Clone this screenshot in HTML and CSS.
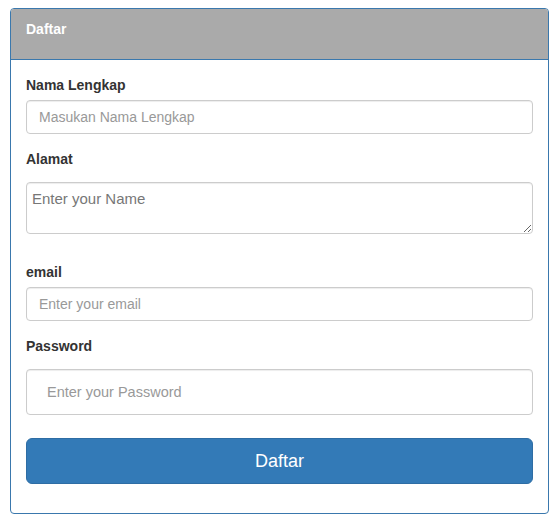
FILE: index.html
```html
<!DOCTYPE html>
<html lang="en">
<head>
    <meta charset="UTF-8">
    <meta name="viewport" content="width=device-width, initial-scale=1.0">
    <title>Daftar</title>
    <link rel="stylesheet" href="styles.css">
</head>
<body>
    <div class="panel">
        <div class="panel-heading">Daftar</div>
        <form class="panel-body">
            <div class="form-group">
                <label for="nama">Nama Lengkap</label>
                <input type="text" id="nama" class="form-control" placeholder="Masukan Nama Lengkap">
            </div>
            <div class="form-group">
                <label for="alamat">Alamat</label>
                <textarea id="alamat" class="form-control spaced" placeholder="Enter your Name"></textarea>
            </div>
            <div class="form-group">
                <label for="email">email</label>
                <input type="email" id="email" class="form-control" placeholder="Enter your email">
            </div>
            <div class="form-group">
                <label for="password">Password</label>
                <input type="password" id="password" class="form-control input-lg spaced" placeholder="Enter your Password">
            </div>
            <button type="button" class="btn-primary">Daftar</button>
        </form>
    </div>
</body>
</html>
```

FILE: styles.css
```css
* {
    box-sizing: border-box;
}
body {
    margin: 0;
    padding: 8px 2px 0 10px;
    font-family: "Liberation Sans", Arial, sans-serif;
    font-size: 14px;
    line-height: 20px;
    color: #333;
    background: #fff;
}
.panel {
    width: 539px;
    border: 1px solid #3a78ad;
    border-radius: 4px;
    overflow: hidden;
}
.panel-heading {
    background-color: #aaa;
    color: #fff;
    font-weight: bold;
    padding: 10px 15px 20px 15px;
    height: 51px;
    border-bottom: 1px solid #3a78ad;
}
.panel-body {
    display: flex;
    flex-direction: column;
    padding: 15px 15px 29px 15px;
    margin: 0;
}
.form-group {
    display: flex;
    flex-direction: column;
    margin-bottom: 15px;
}
.form-group label {
    font-weight: bold;
    margin-bottom: 5px;
}
.form-control {
    width: 100%;
    height: 34px;
    padding: 6px 12px;
    font-family: inherit;
    font-size: 14px;
    color: #555;
    border: 1px solid #ccc;
    border-radius: 4px;
    box-shadow: inset 0 1px 1px rgba(0, 0, 0, 0.075);
}
.form-control::placeholder {
    color: #999;
}
.spaced {
    margin-top: 8px;
}
textarea.form-control {
    height: 52px;
    padding: 7px 5px;
    font-size: 15px;
    resize: vertical;
    margin-bottom: 13px;
}
textarea.form-control::placeholder {
    color: #777;
}
.input-lg {
    height: 46px;
    padding: 10px 20px;
    font-size: 14.5px;
    margin-bottom: 8px;
}
.btn-primary {
    height: 46px;
    width: 100%;
    background-color: #337ab7;
    border: 1px solid #2e6da4;
    border-radius: 6px;
    color: #fff;
    font-family: inherit;
    font-size: 18px;
}
```
